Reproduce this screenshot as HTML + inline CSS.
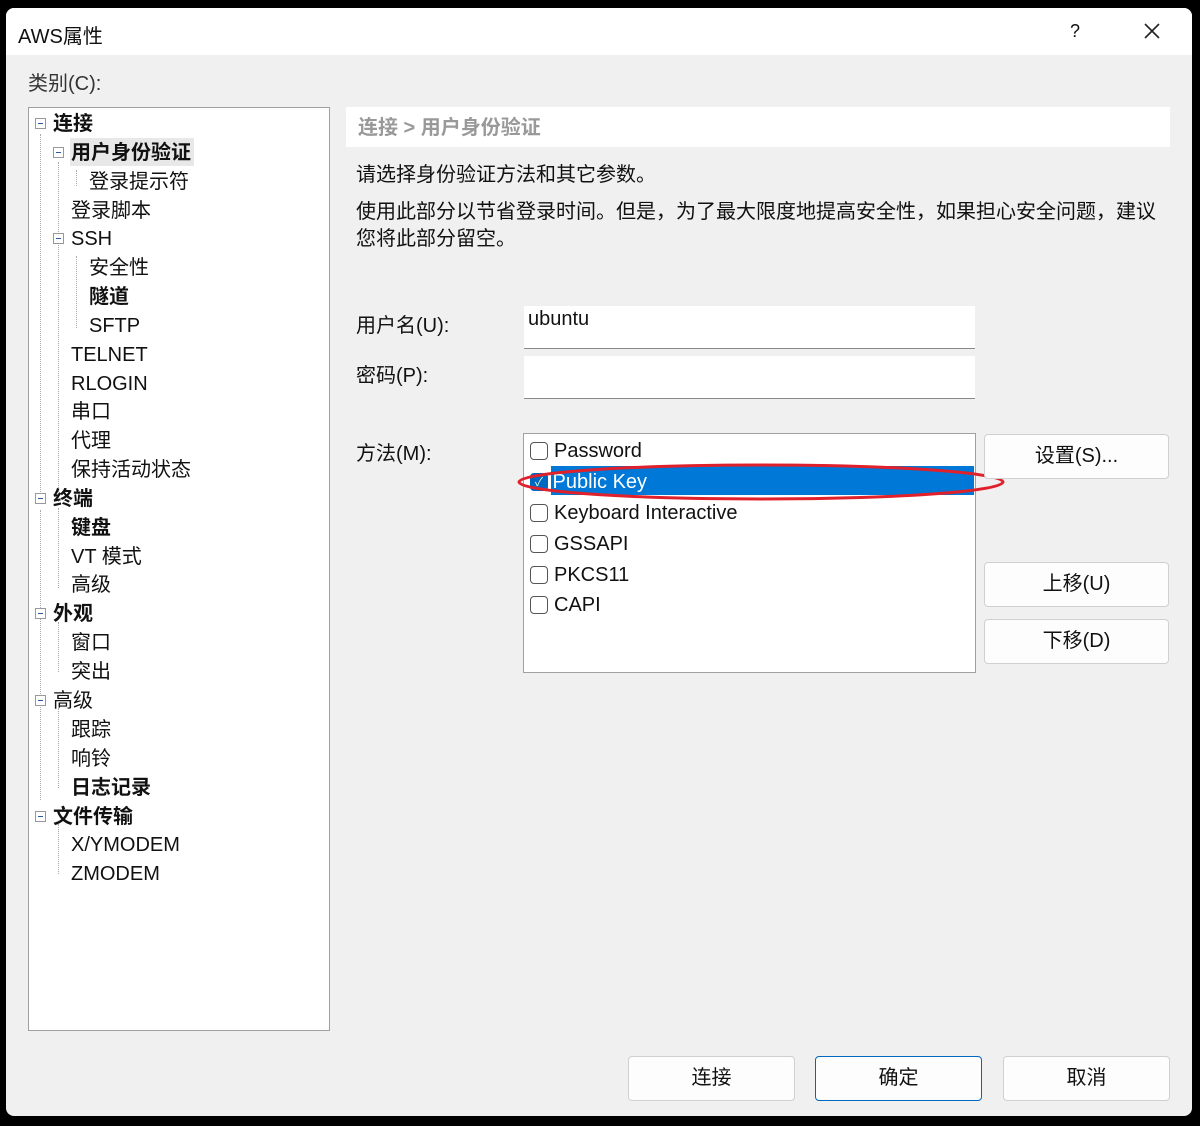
<!DOCTYPE html>
<html><head><meta charset="utf-8"><style>
*{margin:0;padding:0;box-sizing:border-box}
body{width:1200px;height:1126px;background:#000;position:relative;overflow:hidden;font-family:"Liberation Sans","Noto Sans CJK SC",sans-serif;color:#111}
.win{position:absolute;left:6px;top:8px;width:1186px;height:1108px;background:#f0f0f0;border-radius:8px;overflow:hidden}
.title{position:absolute;left:0;top:0;width:100%;height:47px;background:#fff}
.a{position:absolute;white-space:nowrap}
.t{font-size:20px;line-height:30px}
.b{font-weight:bold}
.tree{position:absolute;left:22px;top:99px;width:302px;height:924px;background:#fff;border:1px solid #a0a0a0}
.btn{position:absolute;background:#fdfdfd;border:1px solid #d0d0d0;border-radius:4px;font-size:20px;text-align:center}
.inp{position:absolute;background:#fff;border-bottom:1px solid #8a8a8a;font-size:20px}
.cb{position:absolute;width:18px;height:18px;border:1px solid #555;border-radius:4px;background:#fff}
.pm{position:absolute;width:11px;height:11px;border:1px solid #999;background:#fff}
.pm:after{content:"";position:absolute;left:2px;top:4px;width:5px;height:1px;background:#2b5aa0}
.vl{position:absolute;border-left:1px dotted #aaa}
</style></head><body>
<div class="win">
<div class="title"></div>
<div class="a" style="left:12px;top:12px;font-size:20px">AWS属性</div>
<div class="a" style="left:1064px;top:13px;font-size:18px">?</div>
<svg class="a" style="left:1138px;top:15px" width="16" height="16"><path d="M1 1L15 15M15 1L1 15" stroke="#222" stroke-width="1.6"/></svg>
<div class="a t" style="left:22px;top:61px;color:#333">类别(C):</div>
<div class="tree">
<div class="vl" style="left:11px;top:26px;height:362px"></div>
<div class="vl" style="left:29px;top:54px;height:340px"></div>
<div class="vl" style="left:47px;top:62px;height:16px"></div>
<div class="vl" style="left:47px;top:148px;height:72px"></div>
<div class="vl" style="left:11px;top:402px;height:290px"></div>
<div class="vl" style="left:29px;top:400px;height:80px"></div>
<div class="vl" style="left:29px;top:514px;height:50px"></div>
<div class="vl" style="left:29px;top:600px;height:80px"></div>
<div class="vl" style="left:29px;top:716px;height:50px"></div>
<div class="pm" style="left:6px;top:10px"></div>
<div class="pm" style="left:24px;top:39px"></div>
<div class="pm" style="left:24px;top:125px"></div>
<div class="pm" style="left:6px;top:385px"></div>
<div class="pm" style="left:6px;top:500px"></div>
<div class="pm" style="left:6px;top:587px"></div>
<div class="pm" style="left:6px;top:703px"></div>
<div class="a" style="left:41px;top:30px;width:124px;height:28px;background:#e8e8e8"></div>
</div>
<div style="position:absolute;left:22px;top:99px">
<div class="a t b" style="left:25px;top:2px">连接</div>
<div class="a t b" style="left:43px;top:31px">用户身份验证</div>
<div class="a t" style="left:61px;top:60px">登录提示符</div>
<div class="a t" style="left:43px;top:89px">登录脚本</div>
<div class="a t" style="left:43px;top:117px">SSH</div>
<div class="a t" style="left:61px;top:146px">安全性</div>
<div class="a t b" style="left:61px;top:175px">隧道</div>
<div class="a t" style="left:61px;top:204px">SFTP</div>
<div class="a t" style="left:43px;top:233px">TELNET</div>
<div class="a t" style="left:43px;top:262px">RLOGIN</div>
<div class="a t" style="left:43px;top:290px">串口</div>
<div class="a t" style="left:43px;top:319px">代理</div>
<div class="a t" style="left:43px;top:348px">保持活动状态</div>
<div class="a t b" style="left:25px;top:377px">终端</div>
<div class="a t b" style="left:43px;top:406px">键盘</div>
<div class="a t" style="left:43px;top:435px">VT 模式</div>
<div class="a t" style="left:43px;top:463px">高级</div>
<div class="a t b" style="left:25px;top:492px">外观</div>
<div class="a t" style="left:43px;top:521px">窗口</div>
<div class="a t" style="left:43px;top:550px">突出</div>
<div class="a t" style="left:25px;top:579px">高级</div>
<div class="a t" style="left:43px;top:608px">跟踪</div>
<div class="a t" style="left:43px;top:637px">响铃</div>
<div class="a t b" style="left:43px;top:666px">日志记录</div>
<div class="a t b" style="left:25px;top:695px">文件传输</div>
<div class="a t" style="left:43px;top:723px">X/YMODEM</div>
<div class="a t" style="left:43px;top:752px">ZMODEM</div>
</div>
<div class="a" style="left:340px;top:99px;width:824px;height:40px;background:#fff"></div>
<div class="a t b" style="left:352px;top:105px;color:#999">连接 &gt; 用户身份验证</div>
<div class="a t" style="left:350px;top:152px">请选择身份验证方法和其它参数。</div>
<div class="a t" style="left:350px;top:189px">使用此部分以节省登录时间。但是，为了最大限度地提高安全性，如果担心安全问题，建议</div>
<div class="a t" style="left:350px;top:216px">您将此部分留空。</div>
<div class="a t" style="left:350px;top:303px">用户名(U):</div>
<div class="a t" style="left:350px;top:353px">密码(P):</div>
<div class="a t" style="left:350px;top:431px">方法(M):</div>
<div class="inp" style="left:518px;top:298px;width:451px;height:43px;padding:2px 4px">ubuntu</div>
<div class="inp" style="left:518px;top:348px;width:451px;height:43px"></div>
<div class="a" style="left:517px;top:425px;width:453px;height:240px;background:#fff;border:1px solid #a0a0a0"></div>
<div class="a" style="left:545px;top:458px;width:423px;height:29px;background:#0078d7"></div>
<div class="cb" style="left:524px;top:434px"></div>
<div class="cb" style="left:524px;top:465px;background:#0067c0;border-color:#0067c0;color:#cfe;font-size:12px;line-height:16px;text-align:center">✓</div>
<div class="cb" style="left:524px;top:496px"></div>
<div class="cb" style="left:524px;top:527px"></div>
<div class="cb" style="left:524px;top:558px"></div>
<div class="cb" style="left:524px;top:588px"></div>
<div class="a t" style="left:548px;top:428px">Password</div>
<div class="a t" style="left:541px;top:459px;color:#fff">IPublic Key</div>
<div class="a t" style="left:548px;top:490px">Keyboard Interactive</div>
<div class="a t" style="left:548px;top:521px">GSSAPI</div>
<div class="a t" style="left:548px;top:552px">PKCS11</div>
<div class="a t" style="left:548px;top:582px">CAPI</div>
<svg class="a" style="left:0;top:0" width="1186" height="1108"><ellipse cx="755" cy="474" rx="242" ry="17" fill="none" stroke="#e0202a" stroke-width="3"/></svg>
<div class="btn" style="left:978px;top:426px;width:185px;height:45px;line-height:43px">设置(S)...</div>
<div class="btn" style="left:978px;top:554px;width:185px;height:45px;line-height:43px">上移(U)</div>
<div class="btn" style="left:978px;top:611px;width:185px;height:45px;line-height:43px">下移(D)</div>
<div class="btn" style="left:622px;top:1048px;width:167px;height:45px;line-height:43px">连接</div>
<div class="btn" style="left:809px;top:1048px;width:167px;height:45px;line-height:43px;border-color:#0067c0">确定</div>
<div class="btn" style="left:997px;top:1048px;width:167px;height:45px;line-height:43px">取消</div>
</div>
</body></html>
